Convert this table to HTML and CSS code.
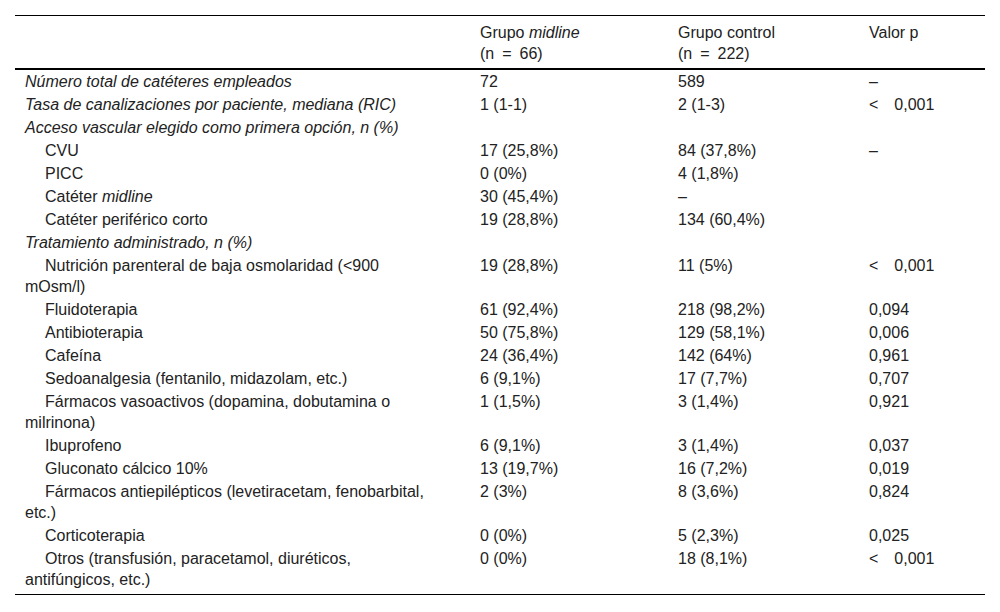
FILE: index.html
```html
<!DOCTYPE html>
<html lang="es">
<head>
<meta charset="utf-8">
<title>Tabla</title>
<link rel="stylesheet" href="styles.css">
</head>
<body>
<table class="data">
  <colgroup>
    <col class="c1">
    <col class="c2">
    <col class="c3">
    <col class="c4">
  </colgroup>
  <thead>
    <tr>
      <th class="label"></th>
      <th>Grupo <i>midline</i><br>(n&ensp;=&ensp;66)</th>
      <th>Grupo control<br>(n&ensp;=&ensp;222)</th>
      <th>Valor p</th>
    </tr>
  </thead>
  <tbody>
    <tr><td class="label"><i>Número total de catéteres empleados</i></td><td>72</td><td>589</td><td>–</td></tr>
    <tr><td class="label"><i>Tasa de canalizaciones por paciente, mediana (RIC)</i></td><td>1 (1-1)</td><td>2 (1-3)</td><td>&lt;&emsp;0,001</td></tr>
    <tr><td class="label"><i>Acceso vascular elegido como primera opción, n (%)</i></td><td></td><td></td><td></td></tr>
    <tr><td class="label sub">CVU</td><td>17 (25,8%)</td><td>84 (37,8%)</td><td>–</td></tr>
    <tr><td class="label sub">PICC</td><td>0 (0%)</td><td>4 (1,8%)</td><td></td></tr>
    <tr><td class="label sub">Catéter <i>midline</i></td><td>30 (45,4%)</td><td>–</td><td></td></tr>
    <tr><td class="label sub">Catéter periférico corto</td><td>19 (28,8%)</td><td>134 (60,4%)</td><td></td></tr>
    <tr><td class="label"><i>Tratamiento administrado, n (%)</i></td><td></td><td></td><td></td></tr>
    <tr><td class="label sub">Nutrición parenteral de baja osmolaridad (&lt;900 mOsm/l)</td><td>19 (28,8%)</td><td>11 (5%)</td><td>&lt;&emsp;0,001</td></tr>
    <tr><td class="label sub">Fluidoterapia</td><td>61 (92,4%)</td><td>218 (98,2%)</td><td>0,094</td></tr>
    <tr><td class="label sub">Antibioterapia</td><td>50 (75,8%)</td><td>129 (58,1%)</td><td>0,006</td></tr>
    <tr><td class="label sub">Cafeína</td><td>24 (36,4%)</td><td>142 (64%)</td><td>0,961</td></tr>
    <tr><td class="label sub">Sedoanalgesia (fentanilo, midazolam, etc.)</td><td>6 (9,1%)</td><td>17 (7,7%)</td><td>0,707</td></tr>
    <tr><td class="label sub">Fármacos vasoactivos (dopamina, dobutamina o milrinona)</td><td>1 (1,5%)</td><td>3 (1,4%)</td><td>0,921</td></tr>
    <tr><td class="label sub">Ibuprofeno</td><td>6 (9,1%)</td><td>3 (1,4%)</td><td>0,037</td></tr>
    <tr><td class="label sub">Gluconato cálcico 10%</td><td>13 (19,7%)</td><td>16 (7,2%)</td><td>0,019</td></tr>
    <tr><td class="label sub">Fármacos antiepilépticos (levetiracetam, fenobarbital, etc.)</td><td>2 (3%)</td><td>8 (3,6%)</td><td>0,824</td></tr>
    <tr><td class="label sub">Corticoterapia</td><td>0 (0%)</td><td>5 (2,3%)</td><td>0,025</td></tr>
    <tr class="last"><td class="label sub">Otros (transfusión, paracetamol, diuréticos, antifúngicos, etc.)</td><td>0 (0%)</td><td>18 (8,1%)</td><td>&lt;&emsp;0,001</td></tr>
  </tbody>
</table>
</body>
</html>
```

FILE: styles.css
```css
html, body {
  margin: 0;
  padding: 0;
  background: #fff;
}

body {
  padding: 15px;
  font-family: "Liberation Sans", Arial, sans-serif;
  font-size: 16px;
  line-height: 21px;
  color: #222;
}

.data {
  width: 970px;
  table-layout: fixed;
  border-collapse: collapse;
  border-top: 1px solid #000;
  border-bottom: 1px solid #000;
}

.c1 { width: 465px; }
.c2 { width: 198px; }
.c3 { width: 191px; }
.c4 { width: 116px; }

.data th,
.data td {
  text-align: left;
  vertical-align: top;
  font-weight: normal;
  padding: 1px 0;
}

.data thead th {
  padding-top: 6px;
  padding-bottom: 4px;
  border-bottom: 2px solid #000;
}

.data .label {
  padding-left: 10px;
  padding-right: 50px;
}

.data .sub {
  text-indent: 20px;
}

.data tr.last td {
  padding-bottom: 4px;
}
```
